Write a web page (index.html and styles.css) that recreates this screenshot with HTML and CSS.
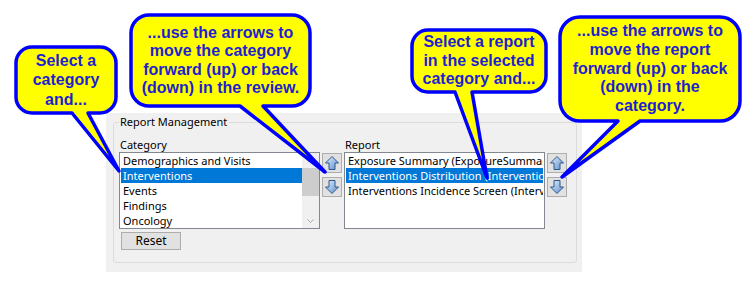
FILE: index.html
```html
<!DOCTYPE html>
<html lang="en">
<head>
    <meta charset="UTF-8">
    <title>Report Management</title>
    <link rel="stylesheet" href="styles.css">
</head>
<body>
    <svg class="defs" width="0" height="0">
        <defs>
            <linearGradient id="setaCor" x1="0" y1="0" x2="1" y2="1">
                <stop offset="0" stop-color="#e2effc"/>
                <stop offset="1" stop-color="#5b8fd0"/>
            </linearGradient>
        </defs>
    </svg>

    <div class="painel">
        <fieldset class="grupo">
            <legend>Report Management</legend>
            <div class="colunas">
                <div class="coluna">
                    <div class="rotulo">Category</div>
                    <div class="lista">
                        <ul class="itens">
                            <li>Demographics and Visits</li>
                            <li class="sel">Interventions</li>
                            <li>Events</li>
                            <li>Findings</li>
                            <li>Oncology</li>
                        </ul>
                        <div class="rolagem">
                            <div class="seta-rolagem">
                                <svg width="7" height="4" viewBox="0 0 7 4"><polyline points="0.5,3.5 3.5,0.5 6.5,3.5" fill="none" stroke="#c2c2c2"/></svg>
                            </div>
                            <div class="polegar"></div>
                            <div class="trilho"></div>
                            <div class="seta-rolagem">
                                <svg width="7" height="4" viewBox="0 0 7 4"><polyline points="0.5,0.5 3.5,3.5 6.5,0.5" fill="none" stroke="#a6a6a6"/></svg>
                            </div>
                        </div>
                    </div>
                    <button class="reset">Reset</button>
                </div>

                <div class="setas">
                    <button class="seta"><svg width="16" height="16" viewBox="0 0 16 16"><path d="M8 1.5 L14.5 8 H11 V14.5 H5 V8 H1.5 Z" fill="url(#setaCor)" stroke="#2e5888"/></svg></button>
                    <button class="seta"><svg width="16" height="16" viewBox="0 0 16 16"><path d="M8 14.5 L14.5 8 H11 V1.5 H5 V8 H1.5 Z" fill="url(#setaCor)" stroke="#2e5888"/></svg></button>
                </div>

                <div class="coluna">
                    <div class="rotulo">Report</div>
                    <div class="lista">
                        <ul class="itens">
                            <li>Exposure Summary (ExposureSummary)</li>
                            <li class="sel">Interventions Distribution (InterventionsDistribution)</li>
                            <li>Interventions Incidence Screen (InterventionsIncidenceScreen)</li>
                        </ul>
                    </div>
                </div>

                <div class="setas">
                    <button class="seta"><svg width="16" height="16" viewBox="0 0 16 16"><path d="M8 1.5 L14.5 8 H11 V14.5 H5 V8 H1.5 Z" fill="url(#setaCor)" stroke="#2e5888"/></svg></button>
                    <button class="seta"><svg width="16" height="16" viewBox="0 0 16 16"><path d="M8 14.5 L14.5 8 H11 V1.5 H5 V8 H1.5 Z" fill="url(#setaCor)" stroke="#2e5888"/></svg></button>
                </div>
            </div>
        </fieldset>
    </div>

    <!-- balões por cima do painel -->
    <div class="balao b1">
        <svg width="104" height="70"><path d="M18 2 H86 A16 16 0 0 1 102 18 V52 A16 16 0 0 1 86 68 H74 L105 126 L58 68 H18 A16 16 0 0 1 2 52 V18 A16 16 0 0 1 18 2 Z"/></svg>
        <p>Select a<br>category<br>and...</p>
    </div>
    <div class="balao b2">
        <svg width="183" height="95"><path d="M20 2 H163 A18 18 0 0 1 181 20 V75 A18 18 0 0 1 163 93 H134 L196 159 L111 93 H20 A18 18 0 0 1 2 75 V20 A18 18 0 0 1 20 2 Z"/></svg>
        <p>...use the arrows to<br>move the category<br>forward (up) or back<br>(down) in the review.</p>
    </div>
    <div class="balao b3">
        <svg width="138" height="66"><path d="M18 2 H120 A16 16 0 0 1 136 18 V48 A16 16 0 0 1 120 64 H62 L77 150 L45 64 H18 A16 16 0 0 1 2 48 V18 A16 16 0 0 1 18 2 Z"/></svg>
        <p>Select a report<br>in the selected<br>category and...</p>
    </div>
    <div class="balao b4">
        <svg width="184" height="108"><path d="M22 2 H162 A20 20 0 0 1 182 22 V86 A20 20 0 0 1 162 106 H82 L4 162 L60 106 H22 A20 20 0 0 1 2 86 V22 A20 20 0 0 1 22 2 Z"/></svg>
        <p>...use the arrows to<br>move the report<br>forward (up) or back<br>(down) in the<br>category.</p>
    </div>
</body>
</html>
```

FILE: styles.css
```css
body{
    margin: 0;
    width: 754px;
    height: 296px;
    overflow: hidden;
    position: relative;
    background: #fff;
    font-family: "Noto Sans", sans-serif;
    font-size: 11px;
    color: #000;
}
.defs{
    position: absolute;
}
.painel{
    margin: 113px 0 0 106px;
    width: 476px;
    height: 159px;
    padding-top: 1px;
    box-sizing: border-box;
    background-color: #f0f0f0;
}
.grupo{
    margin: 0 7px;
    border: 1px solid #dcdcdc;
    border-radius: 3px;
    padding: 7px 7px 12px 5px;
}
.grupo legend{
    padding: 0 2px 0 1px;
    line-height: 16px;
}
.colunas{
    display: flex;
}
.coluna{
    display: flex;
    flex-direction: column;
    align-items: flex-start;
}
.rotulo{
    line-height: 15px;
    padding-left: 1px;
}
.lista{
    display: flex;
    width: 201px;
    height: 77px;
    box-sizing: border-box;
    border: 1px solid #828790;
    background-color: #fff;
}
.itens{
    list-style: none;
    margin: 0;
    padding: 0 1px;
    flex: 1;
    min-width: 0;
    overflow: hidden;
}
.itens li{
    height: 15px;
    line-height: 15px;
    padding-left: 2px;
    white-space: nowrap;
    overflow: hidden;
}
.itens li.sel{
    background-color: #0078d7;
    color: #fff;
}
.lista .itens:has(+ .rolagem){
    padding-right: 0;
}
.rolagem{
    width: 17px;
    display: flex;
    flex-direction: column;
    background-color: #f0f0f0;
}
.seta-rolagem{
    height: 15px;
    display: flex;
    align-items: center;
    justify-content: center;
}
.polegar{
    height: 28px;
    background-color: #cdcdcd;
}
.trilho{
    flex: 1;
}
.reset{
    margin: 3px 0 0 2px;
    width: 60px;
    height: 18px;
    padding: 0;
    border: 1px solid #adadad;
    background-color: #e1e1e1;
    font: inherit;
    font-size: 12px;
    line-height: 16px;
    color: #000;
}
.setas{
    display: flex;
    flex-direction: column;
    gap: 4px;
    padding-top: 16px;
    margin: 0 2px;
}
.seta{
    width: 20px;
    height: 20px;
    padding: 0;
    border: 1px solid #adadad;
    background-color: #e1e1e1;
    display: flex;
    align-items: center;
    justify-content: center;
}

.balao{
    position: absolute;
    display: flex;
    align-items: center;
    justify-content: center;
    text-align: center;
    font: bold 16px "Liberation Sans", Arial, sans-serif;
    color: #1f1fcf;
}
.balao svg{
    position: absolute;
    left: 0;
    top: 0;
    overflow: visible;
}
.balao path{
    fill: #ffff00;
    stroke: #0000ff;
    stroke-width: 3.5;
    stroke-linejoin: round;
}
.balao p{
    position: relative;
    margin: 0;
    line-height: 18.5px;
}
.b1{
    left: 14px;
    top: 45px;
    width: 104px;
    height: 70px;
}
.b1 p{
    line-height: 19.5px;
}
.b2{
    left: 129px;
    top: 13px;
    width: 183px;
    height: 95px;
}
.b3{
    left: 410px;
    top: 28px;
    width: 138px;
    height: 66px;
}
.b4{
    left: 558px;
    top: 15px;
    width: 184px;
    height: 108px;
}
.b4 p{
    line-height: 18.75px;
}
```
